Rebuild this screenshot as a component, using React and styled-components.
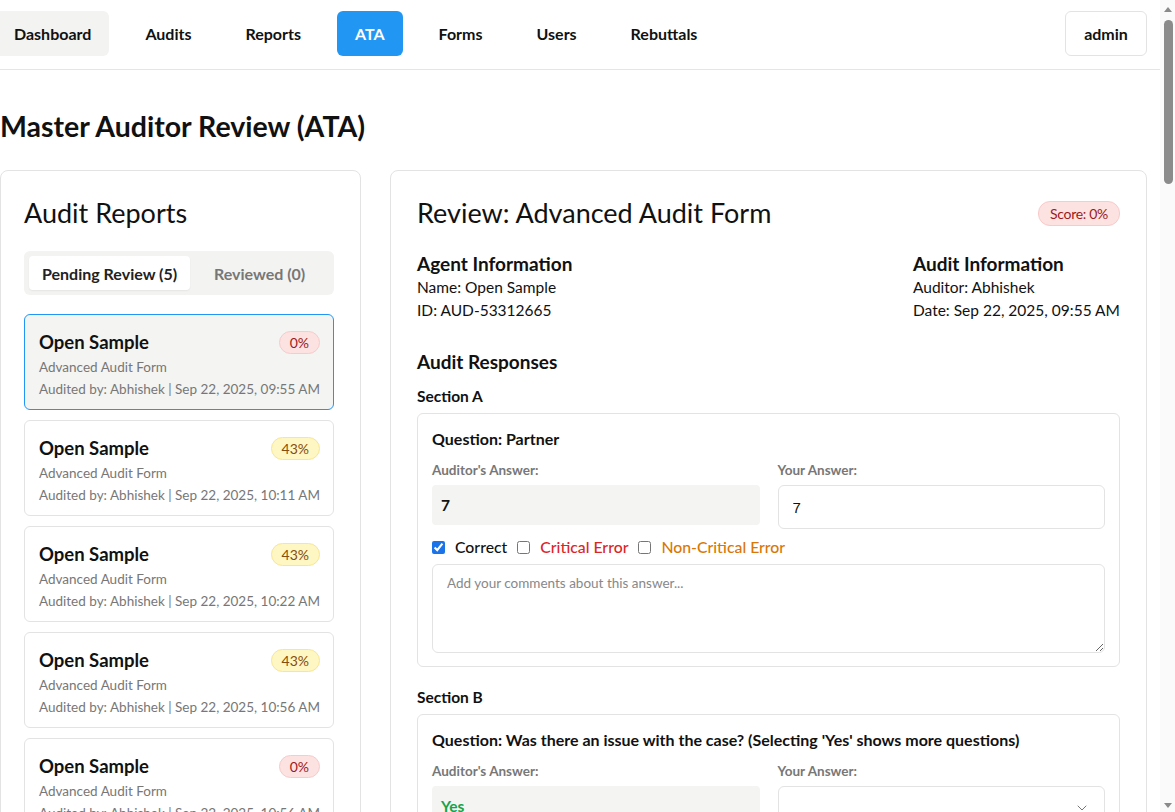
import React from 'react';
import styled, {createGlobalStyle} from 'styled-components';
import {ChevronDown} from 'lucide-react';

const GlobalStyle = createGlobalStyle`
  body{
    margin: 0;
    background: #fff;
    font-family: Lato, "Noto Sans", sans-serif;
    color: #111;
  }
  *{ box-sizing: border-box; }
`;

const navItems = ['Dashboard', 'Audits', 'Reports', 'ATA', 'Forms', 'Users', 'Rebuttals'];

const reports = [
    {score: '0%', tone: 'red', time: '09:55 AM', selected: true},
    {score: '43%', tone: 'yellow', time: '10:11 AM'},
    {score: '43%', tone: 'yellow', time: '10:22 AM'},
    {score: '43%', tone: 'yellow', time: '10:56 AM'},
    {score: '0%', tone: 'red', time: '10:56 AM'},
];

const ReviewChecks = ({first}) => (
    <Checks>
        <CheckLabel>
            <input type="checkbox" defaultChecked={first}/> Correct
        </CheckLabel>
        <CheckLabel tone="#dc2626">
            <input type="checkbox"/> Critical Error
        </CheckLabel>
        <CheckLabel tone="#d97706">
            <input type="checkbox"/> Non-Critical Error
        </CheckLabel>
    </Checks>
);

const App = () => {
    return (
        <>
            <GlobalStyle/>
            <Page>
                <Nav>
                    <NavList>
                        {navItems.map(item => (
                            <NavButton key={item} active={item === 'ATA'} soft={item === 'Dashboard'}>{item}</NavButton>
                        ))}
                    </NavList>
                    <UserButton>admin</UserButton>
                </Nav>
                <Main>
                    <PageTitle>Master Auditor Review (ATA)</PageTitle>
                    <Columns>
                        <Panel>
                            <PanelTitle>Audit Reports</PanelTitle>
                            <Tabs>
                                <Tab active>Pending Review (5)</Tab>
                                <Tab>Reviewed (0)</Tab>
                            </Tabs>
                            <ReportList>
                                {reports.map((r, i) => (
                                    <ReportCard key={i} selected={r.selected}>
                                        <ReportHead>
                                            <ReportName>Open Sample</ReportName>
                                            <Badge tone={r.tone}>{r.score}</Badge>
                                        </ReportHead>
                                        <Meta>Advanced Audit Form</Meta>
                                        <Meta>Audited by: Abhishek | Sep 22, 2025, {r.time}</Meta>
                                    </ReportCard>
                                ))}
                            </ReportList>
                        </Panel>

                        <Panel wide>
                            <ReviewHead>
                                <PanelTitle>Review: Advanced Audit Form</PanelTitle>
                                <Badge tone="red" small>Score: 0%</Badge>
                            </ReviewHead>
                            <InfoRow>
                                <div>
                                    <InfoTitle>Agent Information</InfoTitle>
                                    <InfoLine>Name: Open Sample</InfoLine>
                                    <InfoLine>ID: AUD-53312665</InfoLine>
                                </div>
                                <div>
                                    <InfoTitle>Audit Information</InfoTitle>
                                    <InfoLine>Auditor: Abhishek</InfoLine>
                                    <InfoLine>Date: Sep 22, 2025, 09:55 AM</InfoLine>
                                </div>
                            </InfoRow>

                            <InfoTitle>Audit Responses</InfoTitle>

                            <Section>
                                <SectionTitle>Section A</SectionTitle>
                                <QuestionCard>
                                    <Question>Question: Partner</Question>
                                    <AnswerGrid>
                                        <div>
                                            <FieldLabel>Auditor's Answer:</FieldLabel>
                                            <AuditorAnswer>7</AuditorAnswer>
                                        </div>
                                        <div>
                                            <FieldLabel>Your Answer:</FieldLabel>
                                            <AnswerInput defaultValue="7"/>
                                        </div>
                                    </AnswerGrid>
                                    <ReviewChecks first/>
                                    <Comment placeholder="Add your comments about this answer..."/>
                                </QuestionCard>
                            </Section>

                            <Section>
                                <SectionTitle>Section B</SectionTitle>
                                <QuestionCard>
                                    <Question>Question: Was there an issue with the case? (Selecting 'Yes' shows more questions)</Question>
                                    <AnswerGrid>
                                        <div>
                                            <FieldLabel>Auditor's Answer:</FieldLabel>
                                            <AuditorAnswer tone="#16a34a">Yes</AuditorAnswer>
                                        </div>
                                        <div>
                                            <FieldLabel>Your Answer:</FieldLabel>
                                            <SelectBox>
                                                <span></span>
                                                <ChevronDown size={16} color="#777" strokeWidth={1.5}/>
                                            </SelectBox>
                                        </div>
                                    </AnswerGrid>
                                    <ReviewChecks/>
                                    <Comment placeholder="Add your comments about this answer..."/>
                                </QuestionCard>
                            </Section>
                        </Panel>
                    </Columns>
                </Main>
            </Page>
            <ScrollTrack>
                <ScrollArrow/>
                <ScrollThumb/>
                <ScrollArrow down/>
            </ScrollTrack>
        </>
    )
};

const Page = styled.div`
    padding-right: 15px;
`;

const Nav = styled.nav`
    height: 70px;
    border-bottom: 1px solid #e5e5e5;
    display: flex;
    align-items: flex-start;
    justify-content: space-between;
    padding: 11px 13px 0 0;
`;

const NavList = styled.div`
    display: flex;
    gap: 18px;
    margin-left: -4px;
`;

const NavButton = styled.button`
    height: 45px;
    padding: 0 18px;
    border: none;
    border-radius: 6px;
    font-family: inherit;
    font-size: 16px;
    font-weight: 700;
    color: ${p => p.active ? '#fff' : '#111'};
    background: ${p => p.active ? '#2196f3' : p.soft ? '#f3f3f2' : 'transparent'};
`;

const UserButton = styled.button`
    height: 45px;
    width: 82px;
    border: 1px solid #e3e3e3;
    border-radius: 6px;
    background: #fff;
    font-family: inherit;
    font-size: 16px;
    font-weight: 700;
    color: #111;
`;

const Main = styled.main`
    padding: 39px 13px 40px 0;
`;

const PageTitle = styled.h1`
    margin: 0 0 27px;
    font-size: 28.5px;
    line-height: 34px;
    font-weight: 700;
`;

const Columns = styled.div`
    display: grid;
    grid-template-columns: 361px 1fr;
    gap: 29px;
    align-items: start;
`;

const Panel = styled.section`
    border: 1px solid #e3e3e3;
    border-radius: 8px;
    padding: ${p => p.wide ? '26px' : '26px 26px 26px 23px'};
    background: #fff;
`;

const PanelTitle = styled.h2`
    margin: 0;
    font-size: 27px;
    line-height: 32px;
    font-weight: 400;
`;

const Tabs = styled.div`
    margin: 22px 0 19px;
    display: flex;
    background: #f3f3f2;
    border-radius: 6px;
    padding: 5px;
    height: 44px;
`;

const Tab = styled.div`
    flex: ${p => p.active ? '0 0 auto' : '1'};
    display: flex;
    align-items: center;
    justify-content: center;
    padding: 0 13px;
    border-radius: 4px;
    font-size: 16px;
    font-weight: 700;
    color: ${p => p.active ? '#222' : '#777'};
    background: ${p => p.active ? '#fff' : 'transparent'};
    box-shadow: ${p => p.active ? '0 1px 2px rgba(0,0,0,0.06)' : 'none'};
`;

const ReportList = styled.div`
    display: flex;
    flex-direction: column;
    gap: 10px;
`;

const ReportCard = styled.div`
    height: 96px;
    padding: 14px 13px 12px 14px;
    border: 1px solid ${p => p.selected ? '#2196f3' : '#e3e3e3'};
    border-radius: 6px;
    background: ${p => p.selected ? '#f4f4f2' : '#fff'};
`;

const ReportHead = styled.div`
    display: flex;
    justify-content: space-between;
    align-items: center;
`;

const ReportName = styled.div`
    font-size: 18.5px;
    line-height: 26px;
    font-weight: 700;
`;

const badgeTones = {
    red: {bg: '#fde2e2', border: '#f9caca', color: '#991b1b'},
    yellow: {bg: '#fef7c3', border: '#fbe68c', color: '#854d0e'},
};

const Badge = styled.span`
    display: inline-flex;
    align-items: center;
    height: ${p => p.small ? '25px' : '23px'};
    padding: 0 ${p => p.small ? '11px' : '10px'};
    border-radius: 12px;
    font-size: 14px;
    background: ${p => badgeTones[p.tone].bg};
    border: 1px solid ${p => badgeTones[p.tone].border};
    color: ${p => badgeTones[p.tone].color};
    letter-spacing: ${p => p.small ? '-0.3px' : '0'};
`;

const Meta = styled.div`
    font-size: 13.5px;
    line-height: 20px;
    color: #777;
    margin-top: 2px;
    white-space: nowrap;
`;

const ReviewHead = styled.div`
    display: flex;
    justify-content: space-between;
    align-items: center;
`;

const InfoRow = styled.div`
    display: flex;
    justify-content: space-between;
    margin: 23px 0 28px;
`;

const InfoTitle = styled.h3`
    margin: 0;
    font-size: 19px;
    line-height: 24px;
    font-weight: 700;
`;

const InfoLine = styled.div`
    font-size: 15.5px;
    line-height: 23px;
`;

const Section = styled.div`
    margin-top: 11px;
    & + &{
        margin-top: 19px;
    }
`;

const SectionTitle = styled.h4`
    margin: 0 0 6px;
    font-size: 15.5px;
    line-height: 22px;
    font-weight: 700;
`;

const QuestionCard = styled.div`
    border: 1px solid #e3e3e3;
    border-radius: 6px;
    padding: 14px 14px 13px;
`;

const Question = styled.div`
    font-size: 16px;
    line-height: 22px;
    font-weight: 700;
    margin-bottom: 11px;
`;

const AnswerGrid = styled.div`
    display: grid;
    grid-template-columns: 1fr 1fr;
    gap: 18px;
`;

const FieldLabel = styled.div`
    font-size: 13.5px;
    line-height: 19px;
    font-weight: 700;
    color: #777;
    margin-bottom: 5px;
`;

const AuditorAnswer = styled.div`
    height: 40px;
    display: flex;
    align-items: center;
    padding: 0 9px;
    background: #f4f4f2;
    border-radius: 4px;
    font-size: 15.5px;
    font-weight: 700;
    color: ${p => p.tone || '#111'};
`;

const AnswerInput = styled.input`
    width: 100%;
    height: 44px;
    padding: 0 14px;
    border: 1px solid #e3e3e3;
    border-radius: 6px;
    font-family: "Liberation Sans", Arial, sans-serif;
    font-size: 15px;
    color: #111;
    outline: none;
`;

const SelectBox = styled.div`
    height: 44px;
    display: flex;
    align-items: center;
    justify-content: space-between;
    padding: 0 14px;
    border: 1px solid #e3e3e3;
    border-radius: 6px;
`;

const Checks = styled.div`
    display: flex;
    align-items: center;
    gap: 10px;
    margin: 7px 0 6px;
`;

const CheckLabel = styled.label`
    display: flex;
    align-items: center;
    gap: 10px;
    font-size: 15.8px;
    line-height: 22px;
    font-weight: 500;
    color: ${p => p.tone || '#111'};
    input{
        margin: 0;
        width: 13px;
        height: 13px;
        accent-color: #1a73e8;
    }
`;

const Comment = styled.textarea`
    display: block;
    width: 100%;
    height: 89px;
    padding: 10px 14px;
    border: 1px solid #e3e3e3;
    border-radius: 6px;
    font-family: inherit;
    font-size: 13.5px;
    resize: vertical;
    outline: none;
    &::placeholder{
        color: #888;
    }
`;

const ScrollTrack = styled.div`
    position: fixed;
    top: 0;
    right: 0;
    bottom: 0;
    width: 15px;
    background: #fafafa;
    display: flex;
    flex-direction: column;
    align-items: center;
    padding: 7px 0 4px 1px;
`;

const ScrollArrow = styled.div`
    width: 0;
    height: 0;
    border-left: 4px solid transparent;
    border-right: 4px solid transparent;
    ${p => p.down ? 'border-top: 5px solid #8a8a8a; margin-top: auto;' : 'border-bottom: 5px solid #8a8a8a;'}
`;

const ScrollThumb = styled.div`
    width: 9px;
    height: 164px;
    margin-top: 8px;
    border-radius: 5px;
    background: #8b8b8b;
`;

export default App;
